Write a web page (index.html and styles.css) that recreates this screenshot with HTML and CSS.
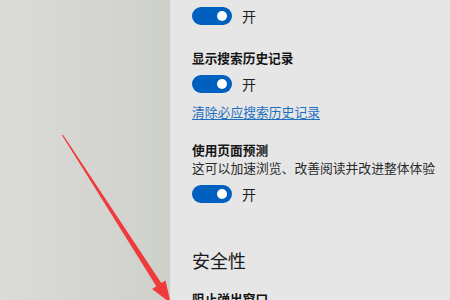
FILE: index.html
```html
<!DOCTYPE html>
<html lang="zh-CN">
<head>
<meta charset="utf-8">
<link rel="stylesheet" href="styles.css">
</head>
<body>
<div class="screen">
  <div class="backdrop"></div>
  <div class="panel">
    <div class="toggle-row first">
      <span class="toggle"><span class="knob"></span></span>
      <span class="state">开</span>
    </div>
    <div class="heading gap-lg">显示搜索历史记录</div>
    <div class="toggle-row gap-sm">
      <span class="toggle"><span class="knob"></span></span>
      <span class="state">开</span>
    </div>
    <a class="link" href="#">清除必应搜索历史记录</a>
    <div class="heading gap-md">使用页面预测</div>
    <div class="desc">这可以加速浏览、改善阅读并改进整体体验</div>
    <div class="toggle-row gap-sm">
      <span class="toggle"><span class="knob"></span></span>
      <span class="state">开</span>
    </div>
    <div class="section">安全性</div>
    <div class="heading gap-sec">阻止弹出窗口</div>
  </div>
  <svg class="arrow" width="450" height="300" viewBox="0 0 450 300">
    <polygon points="63,134.7 161.3,283.1 165.5,280.4 170.7,303.2 152.1,289 156.3,286.3 62,135.3" fill="#ef3b3b"/>
  </svg>
</div>
</body>
</html>
```

FILE: styles.css
```css
html, body {
  margin: 0;
  padding: 0;
  width: 450px;
  height: 300px;
  overflow: hidden;
}
.screen {
  position: relative;
  display: flex;
  width: 450px;
  height: 300px;
  font-family: "Noto Sans CJK SC", "Noto Sans", sans-serif;
}
.backdrop {
  width: 170px;
  flex: none;
  background: linear-gradient(to right, #dbdbd9 0%, #d4d5d1 60%, #cdd0c9 100%);
}
.panel {
  flex: 1;
  background: #e6e6e6;
  padding: 7px 0 0 22px;
  display: flex;
  flex-direction: column;
  align-items: flex-start;
}
.toggle-row {
  display: flex;
  align-items: center;
  gap: 10px;
  height: 18px;
}
.toggle {
  position: relative;
  width: 40px;
  height: 18px;
  border-radius: 9px;
  background: #0060c0;
}
.knob {
  position: absolute;
  right: 5px;
  top: 4px;
  width: 10px;
  height: 10px;
  border-radius: 50%;
  background: #ffffff;
}
.state {
  font-size: 14px;
  line-height: 18px;
  color: #1f1f1f;
}
.heading {
  font-size: 12.7px;
  line-height: 18px;
  font-weight: 700;
  color: #141414;
}
.gap-lg { margin-top: 24px; }
.gap-sm { margin-top: 8px; }
.gap-md { margin-top: 20px; }
.gap-sec { margin-top: 18px; }
.link {
  margin-top: 10px;
  font-size: 12.8px;
  line-height: 18px;
  color: #1f6fc0;
  text-decoration: underline;
  text-underline-offset: 2px;
}
.desc {
  font-size: 12.8px;
  line-height: 18px;
  color: #2a2a2a;
}
.section {
  margin-top: 45px;
  font-size: 18px;
  line-height: 24px;
  color: #1a1a1a;
}
.arrow {
  position: absolute;
  left: 0;
  top: 0;
  pointer-events: none;
}
```
